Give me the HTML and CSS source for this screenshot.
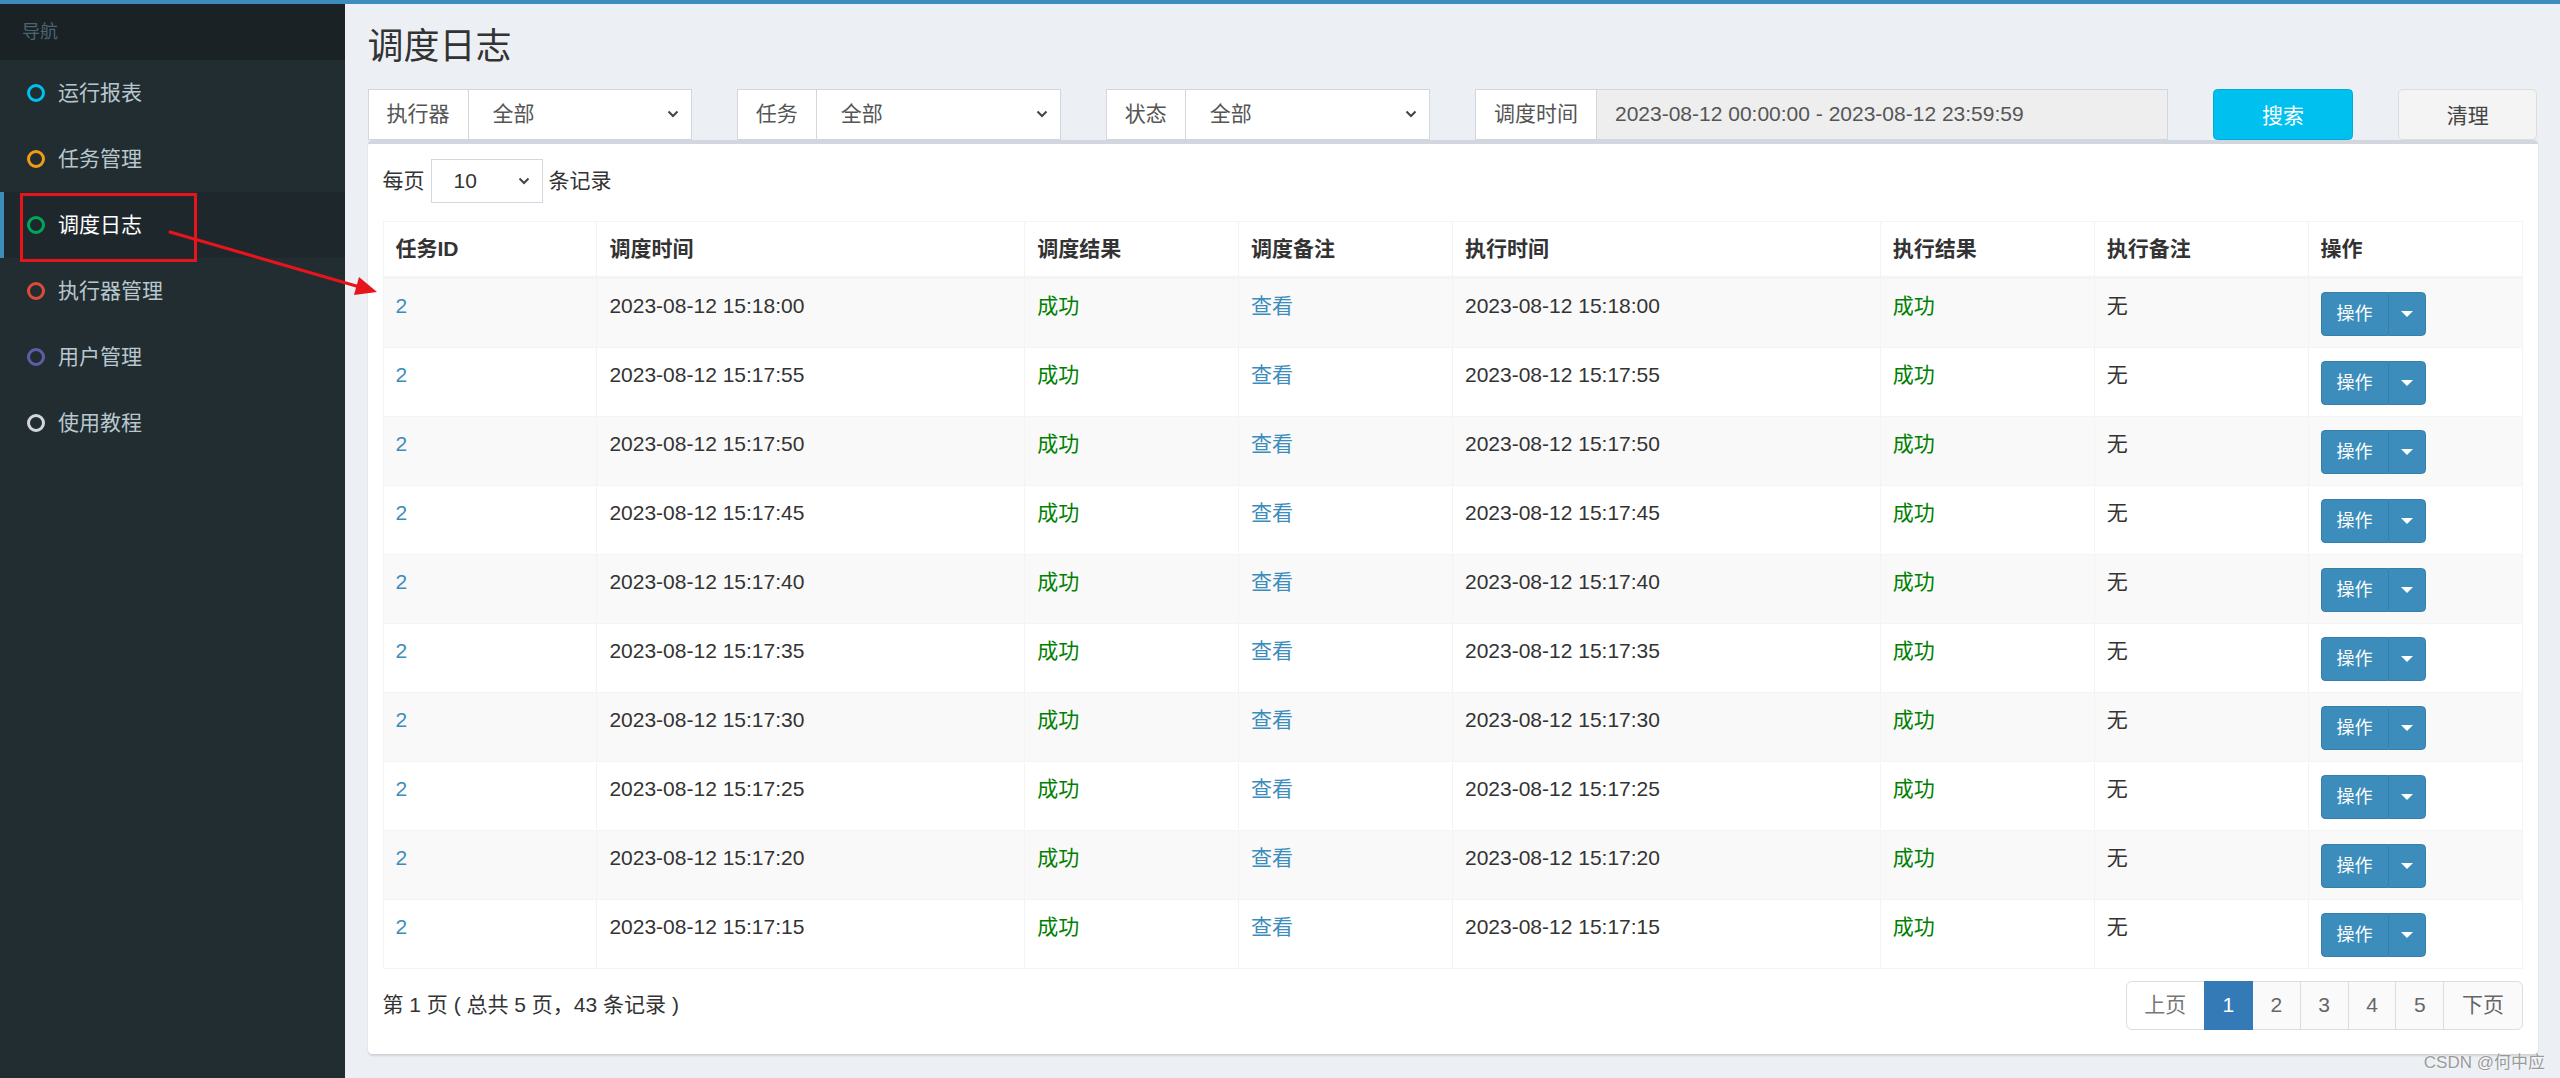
FILE: index.html
```html
<!DOCTYPE html>
<html lang="zh-CN">
<head>
<meta charset="utf-8">
<title>调度日志</title>
<link rel="stylesheet" href="styles.css">
</head>
<body>
<div class="page">
  <div class="topbar"></div>
  <div class="layout">
    <aside class="sidebar">
      <div class="nav-header">导航</div>
      <ul class="menu">
        <li class="menu-item"><span class="dot dot-aqua"></span><span>运行报表</span></li>
        <li class="menu-item"><span class="dot dot-yellow"></span><span>任务管理</span></li>
        <li class="menu-item active"><span class="dot dot-green"></span><span>调度日志</span></li>
        <li class="menu-item"><span class="dot dot-red"></span><span>执行器管理</span></li>
        <li class="menu-item"><span class="dot dot-purple"></span><span>用户管理</span></li>
        <li class="menu-item"><span class="dot dot-gray"></span><span>使用教程</span></li>
      </ul>
    </aside>
    <main class="main">
      <h1 class="page-title">调度日志</h1>
      <div class="filters">
        <div class="igroup span2">
          <span class="addon">执行器</span>
          <div class="fselect"><span>全部</span><svg class="chev" viewBox="0 0 12 8"><path d="M1.5 1.5 L6 6 L10.5 1.5"/></svg></div>
        </div>
        <div class="igroup span2">
          <span class="addon">任务</span>
          <div class="fselect"><span>全部</span><svg class="chev" viewBox="0 0 12 8"><path d="M1.5 1.5 L6 6 L10.5 1.5"/></svg></div>
        </div>
        <div class="igroup span2">
          <span class="addon">状态</span>
          <div class="fselect"><span>全部</span><svg class="chev" viewBox="0 0 12 8"><path d="M1.5 1.5 L6 6 L10.5 1.5"/></svg></div>
        </div>
        <div class="igroup span4">
          <span class="addon">调度时间</span>
          <div class="fdate">2023-08-12 00:00:00 - 2023-08-12 23:59:59</div>
        </div>
        <button class="btn-search span1">搜索</button>
        <button class="btn-clear span1">清理</button>
      </div>

      <section class="box">
        <div class="length">
          <span>每页</span>
          <div class="mini-select"><span>10</span><svg class="chev" viewBox="0 0 12 8"><path d="M1.5 1.5 L6 6 L10.5 1.5"/></svg></div>
          <span>条记录</span>
        </div>

        <table class="log-table">
          <colgroup>
            <col class="c10"><col class="c20"><col class="c10"><col class="c10"><col class="c20"><col class="c10"><col class="c10"><col class="c10">
          </colgroup>
          <thead>
            <tr><th>任务ID</th><th>调度时间</th><th>调度结果</th><th>调度备注</th><th>执行时间</th><th>执行结果</th><th>执行备注</th><th>操作</th></tr>
          </thead>
          <tbody>
            <tr><td><a class="link">2</a></td><td>2023-08-12 15:18:00</td><td class="ok">成功</td><td><a class="link">查看</a></td><td>2023-08-12 15:18:00</td><td class="ok">成功</td><td>无</td><td><div class="op"><span class="op-main">操作</span><span class="op-caret"><i class="caret"></i></span></div></td></tr>
            <tr><td><a class="link">2</a></td><td>2023-08-12 15:17:55</td><td class="ok">成功</td><td><a class="link">查看</a></td><td>2023-08-12 15:17:55</td><td class="ok">成功</td><td>无</td><td><div class="op"><span class="op-main">操作</span><span class="op-caret"><i class="caret"></i></span></div></td></tr>
            <tr><td><a class="link">2</a></td><td>2023-08-12 15:17:50</td><td class="ok">成功</td><td><a class="link">查看</a></td><td>2023-08-12 15:17:50</td><td class="ok">成功</td><td>无</td><td><div class="op"><span class="op-main">操作</span><span class="op-caret"><i class="caret"></i></span></div></td></tr>
            <tr><td><a class="link">2</a></td><td>2023-08-12 15:17:45</td><td class="ok">成功</td><td><a class="link">查看</a></td><td>2023-08-12 15:17:45</td><td class="ok">成功</td><td>无</td><td><div class="op"><span class="op-main">操作</span><span class="op-caret"><i class="caret"></i></span></div></td></tr>
            <tr><td><a class="link">2</a></td><td>2023-08-12 15:17:40</td><td class="ok">成功</td><td><a class="link">查看</a></td><td>2023-08-12 15:17:40</td><td class="ok">成功</td><td>无</td><td><div class="op"><span class="op-main">操作</span><span class="op-caret"><i class="caret"></i></span></div></td></tr>
            <tr><td><a class="link">2</a></td><td>2023-08-12 15:17:35</td><td class="ok">成功</td><td><a class="link">查看</a></td><td>2023-08-12 15:17:35</td><td class="ok">成功</td><td>无</td><td><div class="op"><span class="op-main">操作</span><span class="op-caret"><i class="caret"></i></span></div></td></tr>
            <tr><td><a class="link">2</a></td><td>2023-08-12 15:17:30</td><td class="ok">成功</td><td><a class="link">查看</a></td><td>2023-08-12 15:17:30</td><td class="ok">成功</td><td>无</td><td><div class="op"><span class="op-main">操作</span><span class="op-caret"><i class="caret"></i></span></div></td></tr>
            <tr><td><a class="link">2</a></td><td>2023-08-12 15:17:25</td><td class="ok">成功</td><td><a class="link">查看</a></td><td>2023-08-12 15:17:25</td><td class="ok">成功</td><td>无</td><td><div class="op"><span class="op-main">操作</span><span class="op-caret"><i class="caret"></i></span></div></td></tr>
            <tr><td><a class="link">2</a></td><td>2023-08-12 15:17:20</td><td class="ok">成功</td><td><a class="link">查看</a></td><td>2023-08-12 15:17:20</td><td class="ok">成功</td><td>无</td><td><div class="op"><span class="op-main">操作</span><span class="op-caret"><i class="caret"></i></span></div></td></tr>
            <tr><td><a class="link">2</a></td><td>2023-08-12 15:17:15</td><td class="ok">成功</td><td><a class="link">查看</a></td><td>2023-08-12 15:17:15</td><td class="ok">成功</td><td>无</td><td><div class="op"><span class="op-main">操作</span><span class="op-caret"><i class="caret"></i></span></div></td></tr>
          </tbody>
        </table>

        <div class="table-footer">
          <span class="info">第 1 页 ( 总共 5 页，43 条记录 )</span>
          <ul class="pagination">
            <li class="pg disabled">上页</li>
            <li class="pg current">1</li>
            <li class="pg">2</li>
            <li class="pg">3</li>
            <li class="pg">4</li>
            <li class="pg">5</li>
            <li class="pg">下页</li>
          </ul>
        </div>
      </section>
    </main>
  </div>

  <svg class="annotation" viewBox="0 0 400 320" width="400" height="320">
    <rect x="21.5" y="194.5" width="174" height="66" fill="none" stroke="#e8141c" stroke-width="3"/>
    <line x1="170" y1="232" x2="358" y2="286.5" stroke="#e8141c" stroke-width="3" stroke-linecap="round"/>
    <polygon points="377,292 354,295 359,277" fill="#e8141c"/>
  </svg>
  <div class="watermark">CSDN @何中应</div>
</div>
</body>
</html>
```

FILE: styles.css
```css
html, body {
  margin: 0;
  padding: 0;
  height: 1078px;
  overflow: hidden;
}

body {
  font-family: "Liberation Sans", "Noto Sans CJK SC", sans-serif;
  font-size: 21px;
  line-height: 30px;
  color: #333;
}

.page {
  position: relative;
  height: 1078px;
  display: flex;
  flex-direction: column;
  overflow: hidden;
}

.topbar {
  height: 4px;
  flex: none;
  background: #3c8dbc;
}

.layout {
  flex: 1;
  display: flex;
  min-height: 0;
}

/* ---------- sidebar ---------- */
.sidebar {
  width: 345px;
  flex: none;
  background: #222d32;
}

.nav-header {
  height: 56px;
  box-sizing: border-box;
  padding: 15px 22px;
  background: #1a2226;
  color: #4b646f;
  font-size: 18px;
  line-height: 26px;
}

.menu {
  list-style: none;
  margin: 0;
  padding: 0;
}

.menu-item {
  height: 66px;
  display: flex;
  align-items: center;
  padding-left: 27px;
  gap: 13px;
  color: #b8c7ce;
  font-size: 21px;
  border-left: 4px solid transparent;
  margin-left: -4px;
}

.menu-item.active {
  background: #1e282c;
  color: #fff;
  border-left-color: #3c8dbc;
  margin-left: 0;
  padding-left: 23px;
}

.dot {
  width: 18px;
  height: 18px;
  box-sizing: border-box;
  border-radius: 50%;
  border: 3px solid currentColor;
  flex: none;
}
.dot-aqua { color: #00c0ef; }
.dot-yellow { color: #f39c12; }
.dot-green { color: #00a65a; }
.dot-red { color: #dd4b39; }
.dot-purple { color: #605ca8; }
.dot-gray { color: #d2d6de; }

/* ---------- main ---------- */
.main {
  flex: 1;
  min-width: 0;
  background: #ecf0f5;
  padding: 0 22.5px;
}

.page-title {
  margin: 22.5px 0 0;
  font-size: 36px;
  line-height: 40px;
  font-weight: 400;
  color: #333;
}

.filters {
  margin-top: 22.5px;
  display: grid;
  grid-template-columns: repeat(12, 1fr);
  column-gap: 45px;
  height: 50.5px;
}

.span1 { grid-column: span 1; }
.span2 { grid-column: span 2; }
.span4 { grid-column: span 4; }

.igroup {
  display: flex;
  height: 50.5px;
  box-sizing: border-box;
  border: 1px solid #d2d6de;
  background: #fff;
  color: #555;
}

.addon {
  flex: none;
  padding: 0 18px;
  display: flex;
  align-items: center;
  border-right: 1px solid #d2d6de;
  background: #fff;
  color: #555;
}

.fselect {
  flex: 1;
  display: flex;
  align-items: center;
  justify-content: space-between;
  padding: 0 12px 0 24px;
  color: #555;
}

.chev {
  width: 12px;
  height: 8px;
  fill: none;
  stroke: #444;
  stroke-width: 2;
}

.fdate {
  flex: 1;
  display: flex;
  align-items: center;
  padding: 0 18px;
  background: #eee;
  color: #555;
  white-space: nowrap;
}

.btn-search,
.btn-clear {
  height: 50.5px;
  font-family: inherit;
  font-size: 21px;
  border-radius: 4.5px;
  cursor: pointer;
  padding: 0;
}

.btn-search {
  background: #00c0ef;
  border: 1px solid #00acd6;
  color: #fff;
}

.btn-clear {
  background: #f4f4f4;
  border: 1px solid #ddd;
  color: #444;
}

/* ---------- box ---------- */
.box {
  background: #fff;
  border-top: 4.5px solid #d2d6de;
  border-radius: 4.5px;
  box-shadow: 0 1.5px 2px rgba(0, 0, 0, 0.12);
  padding: 15px 15px 24px;
}

.length {
  display: flex;
  align-items: center;
  gap: 6px;
  height: 45px;
}

.mini-select {
  width: 112px;
  height: 44px;
  box-sizing: border-box;
  border: 1px solid #d2d6de;
  display: flex;
  align-items: center;
  justify-content: space-between;
  padding: 0 12px 0 22px;
  color: #333;
}

.log-table {
  margin-top: 17px;
  width: 100%;
  table-layout: fixed;
  border-collapse: collapse;
}

.c10 { width: 10%; }
.c20 { width: 20%; }

.log-table th,
.log-table td {
  border: 1px solid #f4f4f4;
  padding: 12px 12px 11px;
  line-height: 30px;
  text-align: left;
  vertical-align: top;
  white-space: nowrap;
}

.log-table th {
  font-weight: 700;
  padding-bottom: 12px;
  border-bottom: 3px solid #f4f4f4;
}

.log-table tbody tr:nth-child(odd) {
  background: #f9f9f9;
}

.link {
  color: #3c8dbc;
  text-decoration: none;
}

.ok {
  color: #008000;
}

.op {
  display: inline-flex;
  height: 44px;
  margin-top: 1px;
}

.op-main {
  display: flex;
  align-items: center;
  box-sizing: border-box;
  width: 67px;
  justify-content: center;
  background: #3c8dbc;
  border: 1px solid #367fa9;
  border-right: none;
  border-radius: 4.5px 0 0 4.5px;
  color: #fff;
  font-size: 18px;
}

.op-caret {
  display: flex;
  align-items: center;
  justify-content: center;
  box-sizing: border-box;
  width: 38px;
  background: #3c8dbc;
  border: 1px solid #367fa9;
  border-radius: 0 4.5px 4.5px 0;
}

.caret {
  width: 0;
  height: 0;
  border-top: 6px solid #fff;
  border-left: 6px solid transparent;
  border-right: 6px solid transparent;
}

.table-footer {
  margin-top: 12px;
  display: flex;
  justify-content: space-between;
  align-items: center;
}

.info {
  color: #333;
}

.pagination {
  list-style: none;
  margin: 0;
  padding: 0;
  display: flex;
}

.pg {
  height: 49.5px;
  box-sizing: border-box;
  padding: 0 17.6px;
  border: 1px solid #ddd;
  margin-left: -1px;
  background: #fafafa;
  color: #666;
  display: flex;
  align-items: center;
}

.pg:first-child {
  margin-left: 0;
  border-radius: 6px 0 0 6px;
}

.pg:last-child {
  border-radius: 0 6px 6px 0;
}

.pg.disabled {
  background: #fff;
  color: #777;
}

.pg.current {
  background: #337ab7;
  border-color: #337ab7;
  color: #fff;
  position: relative;
  z-index: 1;
}

/* ---------- overlays ---------- */
.annotation {
  position: absolute;
  left: 0;
  top: 0;
  pointer-events: none;
}

.watermark {
  position: absolute;
  right: 15px;
  bottom: 5px;
  font-size: 17px;
  line-height: 20px;
  color: #9a9a9a;
  text-shadow: 0 0 2px #fff;
}
```
